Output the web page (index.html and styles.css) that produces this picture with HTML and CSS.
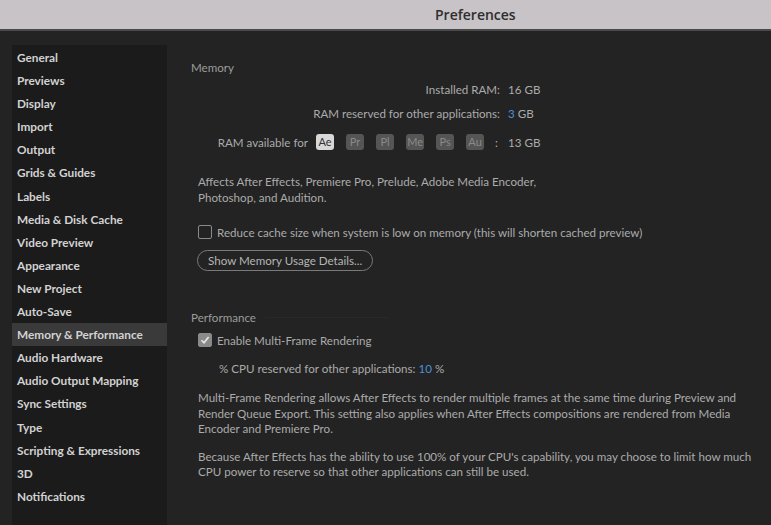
FILE: index.html
```html
<!DOCTYPE html>
<html>
<head>
  <meta charset="UTF-8">
  <title>Preferences</title>
  <link rel="stylesheet" href="styles.css">
</head>
<body>
  <div class="titlebar">Preferences</div>
  <div class="window">
    <ul class="sidebar">
      <li>General</li>
      <li>Previews</li>
      <li>Display</li>
      <li>Import</li>
      <li>Output</li>
      <li>Grids &amp; Guides</li>
      <li>Labels</li>
      <li>Media &amp; Disk Cache</li>
      <li>Video Preview</li>
      <li>Appearance</li>
      <li>New Project</li>
      <li>Auto-Save</li>
      <li class="selected">Memory &amp; Performance</li>
      <li>Audio Hardware</li>
      <li>Audio Output Mapping</li>
      <li>Sync Settings</li>
      <li>Type</li>
      <li>Scripting &amp; Expressions</li>
      <li>3D</li>
      <li>Notifications</li>
    </ul>
    <div class="main">
      <div class="section-title">Memory</div>
      <div class="ram-row first">
        <div class="ram-label">Installed RAM:</div>
        <div class="ram-value">16 GB</div>
      </div>
      <div class="ram-row">
        <div class="ram-label">RAM reserved for other applications:</div>
        <div class="ram-value"><span class="num">3</span> GB</div>
      </div>
      <div class="ram-row apps">
        <div class="ram-label">
          RAM available for
          <span class="badge on">Ae</span>
          <span class="badge">Pr</span>
          <span class="badge">Pl</span>
          <span class="badge">Me</span>
          <span class="badge">Ps</span>
          <span class="badge">Au</span>
          <span class="colon">:</span>
        </div>
        <div class="ram-value">13 GB</div>
      </div>
      <p class="note first-note">Affects After Effects, Premiere Pro, Prelude, Adobe Media Encoder,<br>Photoshop, and Audition.</p>
      <div class="check">
        <span class="box"></span>
        Reduce cache size when system is low on memory (this will shorten cached preview)
      </div>
      <button class="pill">Show Memory Usage Details...</button>

      <div class="section-title perf">Performance <span class="rule"></span></div>
      <div class="check">
        <span class="box checked">
          <svg width="10" height="10" viewBox="0 0 10 10"><path d="M1.5 5.2 L4 7.8 L8.6 2" fill="none" stroke="#e8e8e8" stroke-width="1.6"/></svg>
        </span>
        Enable Multi-Frame Rendering
      </div>
      <div class="cpu">% CPU reserved for other applications: <span class="num">10</span> %</div>
      <p class="note">Multi-Frame Rendering allows After Effects to render multiple frames at the same time during Preview and Render Queue Export. This setting also applies when After Effects compositions are rendered from Media Encoder and Premiere Pro.</p>
      <p class="note">Because After Effects has the ability to use 100% of your CPU's capability, you may choose to limit how much CPU power to reserve so that other applications can still be used.</p>
    </div>
  </div>
</body>
</html>
```

FILE: styles.css
```css
html, body {
  margin: 0;
  height: 100%;
}
body {
  background-color: #232323;
  font-family: Lato, "Open Sans", sans-serif;
  font-size: 11.6px;
  color: #ababab;
  overflow: hidden;
}
.titlebar {
  height: 29px;
  line-height: 29px;
  background-color: #c7c3c7;
  border-bottom: 2px solid #4a4a4a;
  color: #2e2e2e;
  font-family: "Open Sans", sans-serif;
  font-size: 14px;
  font-weight: 600;
  padding-left: 435px;
}
.window {
  display: flex;
  height: 494px;
}
.sidebar {
  list-style: none;
  margin: 14px 0 0 12px;
  padding: 1px 0 0 0;
  width: 155px;
  background-color: #1b1b1b;
}
.sidebar li {
  height: 23.1px;
  line-height: 23.1px;
  padding-left: 5px;
  color: #d2d2d2;
  font-size: 11.8px;
  font-weight: 700;
}
.sidebar li.selected {
  background-color: #3a3a3a;
}
.main {
  flex: 1;
  padding: 28px 0 0 24px;
}
.section-title {
  color: #9c9c9c;
  height: 16px;
  display: flex;
  align-items: center;
}
.section-title.perf {
  margin-top: 38px;
}
.rule {
  width: 123px;
  height: 1px;
  margin-left: 9px;
  background-color: #292929;
}
.ram-row {
  display: flex;
  align-items: center;
  height: 24px;
}
.ram-row.first {
  margin-top: 2px;
}
.ram-row.apps {
  height: 34px;
}
.ram-label {
  width: 309px;
  display: flex;
  justify-content: flex-end;
  align-items: center;
}
.ram-value {
  margin-left: 8px;
}
.num {
  color: #4d8fd6;
}
.badge {
  display: inline-block;
  width: 18px;
  height: 16px;
  line-height: 16px;
  text-align: center;
  border-radius: 3px;
  background-color: #555;
  color: #8a8a8a;
  font-size: 11px;
  margin-left: 12px;
}
.badge.on {
  background-color: #d8d8d8;
  color: #333;
  margin-left: 8px;
}
.colon {
  margin-left: 11px;
  margin-right: 2px;
}
.note {
  margin: 0 0 0 7px;
  line-height: 15.5px;
  width: 556px;
}
.note.first-note {
  margin-top: 15px;
}
.check {
  display: flex;
  align-items: center;
  margin: 19px 0 0 7px;
  height: 16px;
}
.perf + .check {
  margin-top: 7px;
}
.box {
  display: inline-flex;
  align-items: center;
  justify-content: center;
  box-sizing: border-box;
  width: 14px;
  height: 14px;
  border: 1.5px solid #8a8a8a;
  border-radius: 2px;
  margin-right: 5px;
}
.box.checked {
  background-color: #8a8a8a;
  border-color: #8a8a8a;
}
.pill {
  display: block;
  margin: 10px 0 0 6px;
  height: 21px;
  padding: 0 10px;
  border: 1.5px solid #7a7a7a;
  border-radius: 11px;
  background: transparent;
  color: #b5b5b5;
  font-family: Lato, "Open Sans", sans-serif;
  font-size: 11.6px;
}
.cpu {
  margin: 14px 0 15px 28px;
}
.cpu + .note {
  margin-bottom: 12px;
}
```
